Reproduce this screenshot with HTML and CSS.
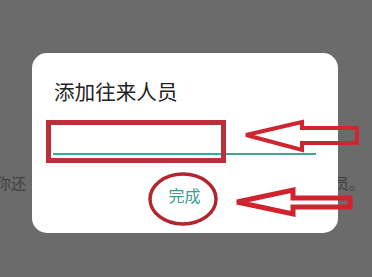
FILE: index.html
```html
<!DOCTYPE html>
<html lang="zh">
<head>
<meta charset="utf-8">
<link rel="stylesheet" href="styles.css">
</head>
<body>
<div class="screen">
  <div class="bg-line"><span class="bg-left">你还</span><span class="bg-right">员。</span></div>
  <div class="dialog">
    <div class="title">添加往来人员</div>
    <div class="field"><div class="underline"></div></div>
    <div class="actions"><span class="done">完成</span></div>
  </div>
  <svg class="marks" width="372" height="277" viewBox="0 0 372 277">
    <rect x="48.5" y="122.5" width="175" height="38" fill="none" stroke="#b8303a" stroke-width="5"/>
    <polygon points="246,135 302,122 302,128 357,128 357,143 302,143 302,150" fill="none" stroke="#cf2530" stroke-width="4" stroke-linejoin="miter"/>
    <polygon points="237,202 293,190 293,198 350,198 350,207 293,207 293,214" fill="none" stroke="#d0232e" stroke-width="5" stroke-linejoin="miter"/>
    <ellipse cx="183" cy="199" rx="33" ry="25" fill="none" stroke="#b2262f" stroke-width="3.5"/>
  </svg>
</div>
</body>
</html>
```
FILE: styles.css
```css
html, body {
  margin: 0;
  padding: 0;
}
body {
  background: #6b6b6b;
  font-family: "Noto Sans CJK SC", "Noto Sans", sans-serif;
}
.screen {
  position: relative;
  width: 372px;
  height: 277px;
  overflow: hidden;
}
.bg-line {
  display: flex;
  justify-content: space-between;
  padding-top: 172px;
  margin-left: -4px;
  margin-right: 8px;
  font-size: 15px;
  line-height: 22px;
  color: #404040;
}
.dialog {
  position: absolute;
  left: 32px;
  top: 53px;
  width: 306px;
  height: 180px;
  background: #fff;
  border-radius: 15px;
  display: flex;
  flex-direction: column;
  box-sizing: border-box;
  padding: 0 22px 0 21px;
}
.title {
  margin-top: 25px;
  padding-left: 1px;
  font-size: 20.6px;
  line-height: 26px;
  color: #222;
}
.field {
  height: 51px;
  display: flex;
  align-items: flex-end;
}
.underline {
  width: 100%;
  height: 2px;
  background: #3aa797;
}
.actions {
  display: flex;
  justify-content: center;
  margin-top: 29px;
}
.done {
  font-size: 16px;
  line-height: 22px;
  color: #3a9f8e;
}
.marks {
  position: absolute;
  left: 0;
  top: 0;
}
```
